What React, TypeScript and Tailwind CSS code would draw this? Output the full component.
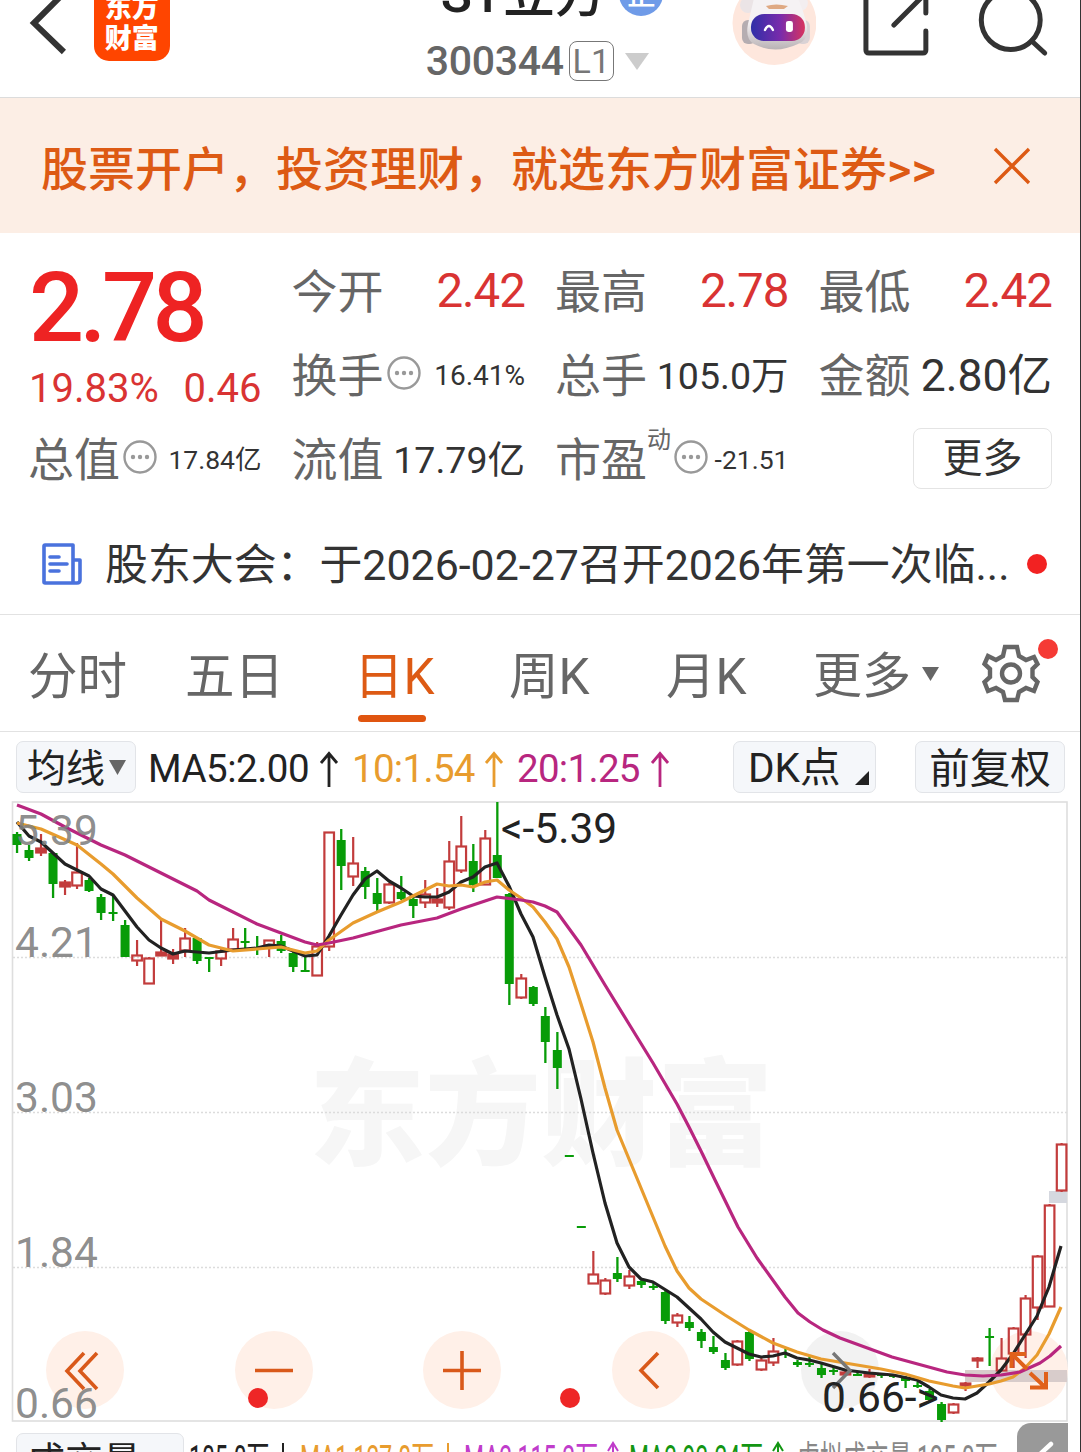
import React from 'react';

type Candle = [kind: 'r' | 'g', top: number, bottom: number, high: number, low: number];

const FONT = "font-[Roboto,'Noto_Sans_CJK_SC',sans-serif]";

const STEP = 12.007;
const FIRST_X = 17;

// body top, body bottom, wick top, wick bottom (chart pixels)
const candles: Candle[] = [
  ['g', 834, 845, 832, 853],
  ['g', 850, 858, 845, 861],
  ['r', 848, 853, 834, 856],
  ['g', 853, 884, 853, 898],
  ['r', 882, 887, 880, 895],
  ['r', 872, 886, 843, 889],
  ['g', 880, 891, 878, 892],
  ['g', 897, 913, 894, 920],
  ['g', 912, 914, 895, 921],
  ['g', 925, 957, 920, 957],
  ['r', 955, 961, 940, 966],
  ['r', 958, 984, 957, 984],
  ['r', 952, 956, 920, 956],
  ['r', 954, 959, 949, 964],
  ['r', 938, 951, 928, 957],
  ['g', 938, 961, 938, 964],
  ['g', 957, 959, 957, 972],
  ['r', 951, 959, 947, 966],
  ['r', 939, 950, 928, 950],
  ['g', 941, 943, 928, 949],
  ['g', 947, 949, 936, 955],
  ['r', 940, 946, 940, 957],
  ['g', 941, 951, 935, 953],
  ['g', 953, 967, 951, 972],
  ['g', 970, 972, 957, 972],
  ['r', 946, 976, 942, 976],
  ['r', 832, 947, 832, 951],
  ['g', 840, 866, 829, 890],
  ['r', 863, 877, 837, 886],
  ['g', 871, 887, 867, 899],
  ['g', 893, 904, 878, 911],
  ['r', 884, 903, 883, 904],
  ['g', 892, 899, 876, 900],
  ['g', 899, 906, 896, 918],
  ['r', 894, 903, 880, 908],
  ['r', 899, 903, 888, 907],
  ['r', 861, 908, 841, 910],
  ['r', 846, 871, 816, 873],
  ['g', 861, 885, 844, 892],
  ['r', 838, 885, 830, 885],
  ['g', 855, 878, 802, 878],
  ['g', 894, 984, 893, 1005],
  ['r', 978, 998, 974, 999],
  ['g', 987, 1004, 986, 1006],
  ['g', 1016, 1042, 1007, 1063],
  ['g', 1050, 1068, 1032, 1089],
  ['g', 1155, 1157, 1155, 1157],
  ['g', 1226, 1228, 1226, 1228],
  ['r', 1274, 1284, 1251, 1284],
  ['r', 1280, 1294, 1278, 1295],
  ['g', 1273, 1279, 1257, 1282],
  ['r', 1276, 1286, 1270, 1289],
  ['g', 1281, 1285, 1279, 1288],
  ['g', 1286, 1288, 1283, 1290],
  ['g', 1292, 1321, 1290, 1324],
  ['r', 1315, 1323, 1313, 1327],
  ['g', 1322, 1328, 1316, 1331],
  ['g', 1332, 1341, 1329, 1348],
  ['g', 1347, 1352, 1336, 1354],
  ['g', 1360, 1368, 1353, 1370],
  ['r', 1341, 1365, 1340, 1366],
  ['g', 1332, 1359, 1329, 1361],
  ['r', 1360, 1370, 1357, 1371],
  ['r', 1351, 1363, 1338, 1366],
  ['g', 1353, 1355, 1349, 1358],
  ['g', 1362, 1365, 1360, 1367],
  ['g', 1363, 1365, 1355, 1367],
  ['g', 1368, 1375, 1364, 1378],
  ['g', 1370, 1372, 1367, 1375],
  ['r', 1372, 1375, 1371, 1376],
  ['g', 1374, 1376, 1372, 1376],
  ['r', 1373, 1377, 1369, 1378],
  ['g', 1374, 1376, 1373, 1378],
  ['g', 1375, 1377, 1374, 1378],
  ['g', 1377, 1381, 1376, 1388],
  ['g', 1385, 1387, 1382, 1388],
  ['g', 1391, 1400, 1389, 1402],
  ['g', 1404, 1420, 1402, 1422],
  ['r', 1404, 1413, 1403, 1414],
  ['r', 1383, 1386, 1382, 1391],
  ['r', 1358, 1361, 1357, 1368],
  ['g', 1336, 1338, 1328, 1366],
  ['r', 1358, 1371, 1338, 1371],
  ['r', 1328, 1354, 1327, 1368],
  ['r', 1298, 1335, 1295, 1358],
  ['r', 1256, 1308, 1255, 1320],
  ['r', 1205, 1307, 1204, 1307],
  ['r', 1144, 1191, 1143, 1192],
];

const ma5 =
  '17,822 29,836 41,842 53,853 65,864 77,870 89,876 101,889 113,895 125,911 137,927 149,940 161,948 173,954 185,951 209,953 233,950 257,948 269,945 281,946 293,951 305,956 317,955 329,936 341,915 353,895 365,879 377,871 389,881 401,888 413,896 425,897 437,897 449,892 461,882 473,877 485,867 497,863 509,886 521,914 533,937 545,977 557,1015 569,1049 581,1099 593,1153 605,1203 617,1243 629,1267 641,1279 653,1282 677,1297 701,1319 713,1332 725,1342 749,1354 761,1357 773,1356 785,1353 797,1358 809,1360 821,1363 845,1370 869,1373 893,1375 917,1380 929,1387 941,1395 953,1398 965,1399 977,1393 989,1382 1001,1370 1013,1354 1025,1335 1037,1316 1049,1287 1061,1246';

const ma10 =
  '17,823 41,829 77,845 101,864 113,874 137,898 161,919 185,931 209,945 221,948 233,951 257,949 281,947 305,953 317,951 329,940 353,923 377,912 401,902 413,896 425,890 437,884 449,886 461,885 473,887 485,882 497,880 509,890 521,898 533,907 545,922 557,939 569,967 581,1004 593,1042 605,1088 617,1130 629,1159 641,1188 665,1246 677,1271 689,1288 701,1299 725,1315 749,1330 773,1343 797,1352 821,1359 845,1363 881,1369 905,1374 929,1381 953,1386 965,1388 989,1384 1001,1381 1013,1377 1025,1368 1037,1355 1049,1334 1061,1307';

const ma20 =
  '17,805 41,814 65,827 101,845 125,855 149,867 197,891 209,900 221,906 257,924 281,933 305,942 317,945 329,943 353,938 401,925 437,918 461,909 485,901 497,897 521,900 533,902 545,906 557,912 581,945 605,985 629,1024 653,1063 677,1104 689,1127 701,1151 715,1180 738,1227 757,1258 785,1297 798,1313 810,1322 823,1330 840,1338 892,1357 947,1372 965,1375 983,1376 1001,1375 1020,1372 1040,1363 1050,1356 1061,1346';

const priceLabels = [
  { text: '5.39', y: 845 },
  { text: '4.21', y: 957 },
  { text: '3.03', y: 1112 },
  { text: '1.84', y: 1267 },
  { text: '0.66', y: 1418 },
];

const InfoDots = () => (
  <svg width="34" height="34" viewBox="0 0 34 34" className="shrink-0">
    <circle cx="17" cy="17" r="15.5" fill="none" stroke="#999" strokeWidth="2.4" />
    <circle cx="10" cy="17" r="2.2" fill="#999" />
    <circle cx="17" cy="17" r="2.2" fill="#999" />
    <circle cx="24" cy="17" r="2.2" fill="#999" />
  </svg>
);

const UpArrow = ({ color }: { color: string }) => (
  <svg width="20" height="38" viewBox="0 0 20 38" fill="none" stroke={color} strokeWidth="2.8" className="mt-[3px]">
    <path d="M10 37V3M2 13L10 3.5L18 13" />
  </svg>
);

const Header = () => (
  <header className="flex h-[98px] shrink-0 overflow-hidden border-b border-[#dcdcdc]">
    <svg width="94" height="97" viewBox="0 0 94 97" fill="none" stroke="#333" strokeWidth="6">
      <path d="M64 -7L34 23L64 52" />
    </svg>
    <div className="-mt-[15px] flex h-[76px] w-[76px] flex-col items-center justify-end rounded-[15px] bg-[#ff4500] pb-[6px] text-[27px] leading-[31px] font-black text-white">
      <span>东方</span>
      <span>财富</span>
    </div>
    <div className="ml-[255px] flex w-[240px] flex-col">
      <div className="-mt-[36px] flex h-[62px] items-center pl-[16px] text-[51.5px] leading-[62px] font-medium whitespace-nowrap text-[#222]">
        ST立方
        <span className="-mt-[3px] ml-[13px] flex h-[44px] w-[44px] shrink-0 items-center justify-center rounded-full bg-[#6f9be8] text-[30px] leading-[44px] text-white">
          企
        </span>
      </div>
      <div className="mt-[4px] flex h-[62px] items-center pl-[1px]">
        <span className="text-[41px] leading-none font-medium tracking-[-0.3px] text-[#666]">300344</span>
        <span className="ml-[5px] flex h-[40px] w-[45px] items-center justify-center rounded-[8px] border-[1.5px] border-[#777] text-[34px] leading-none text-[#777]">
          L1
        </span>
        <svg width="24" height="17" viewBox="0 0 24 17" className="ml-[11px] shrink-0">
          <path d="M0 0H24L12 17Z" fill="#ccc" />
        </svg>
      </div>
    </div>
    <svg width="84" height="97" viewBox="732 0 84 97" className="ml-[68px]">
      <defs>
        <linearGradient id="visor" x1="0" x2="1">
          <stop offset="0" stopColor="#2f2fa8" />
          <stop offset="0.55" stopColor="#7a2bab" />
          <stop offset="1" stopColor="#d8345f" />
        </linearGradient>
        <linearGradient id="shell" x1="0" x2="0" y1="0" y2="1">
          <stop offset="0.5" stopColor="#f5f2f4" />
          <stop offset="1" stopColor="#b9b2b5" />
        </linearGradient>
      </defs>
      <circle cx="774.500" cy="23" r="42" fill="#fee7dd" />
      <circle cx="748" cy="5" r="8" fill="#ebe4e6" />
      <circle cx="800" cy="3" r="8" fill="#f3eef0" />
      <rect x="742" y="20" width="14" height="24" rx="6" fill="#b5adb1" />
      <rect x="796" y="20" width="14" height="24" rx="6" fill="#d9d2d5" />
      <path d="M755 -6H796Q803 8 807 25Q809 40 798 44Q775 55 754 44Q745 39 748 24Z" fill="url(#shell)" />
      <path d="M766 6Q776 3 788 6L784 9H769Z" fill="#dfa983" />
      <rect x="751" y="14" width="54" height="27" rx="13" fill="url(#visor)" />
      <path d="M765 30Q769 22 773 30" fill="none" stroke="#fff" strokeWidth="2.4" strokeLinecap="round" />
      <rect x="786" y="21" width="7" height="11" rx="2.5" fill="#fff" />
    </svg>
    <svg width="264" height="97" viewBox="816 0 264 97" fill="none" stroke="#333" strokeWidth="5" strokeLinecap="round">
      <path d="M866 -10V50Q866 53 869 53H923Q926 53 926 50V31M926 -10V13M894 25L926 -7" />
      <circle cx="1011" cy="20" r="29.500" />
      <path d="M1032 41L1045 53" />
    </svg>
  </header>
);

const Banner = () => (
  <div className="flex h-[135px] shrink-0 items-center bg-[#fceee5] pl-[41px] text-[47px] font-medium text-[#dd5a14]">
    <span className="mt-[9px] w-[951px] leading-[60px] whitespace-nowrap">股票开户，投资理财，就选东方财富证券&gt;&gt;</span>
    <svg width="40" height="40" viewBox="0 0 40 40" className="shrink-0" stroke="currentColor" strokeWidth="3.4">
      <path d="M3 3L37 37M37 3L3 37" />
    </svg>
  </div>
);

interface StatProps {
  label: string;
  value: string;
  valueClass: string;
  info?: boolean;
  sup?: string;
}

const Stat = ({ label, value, valueClass, info, sup }: StatProps) => (
  <div className="flex h-[84px] items-center whitespace-nowrap">
    <span className="text-[46px] leading-[60px] text-[#666]">{label}</span>
    {sup && <span className="-mt-[40px] text-[24px] leading-[28px] text-[#666]">{sup}</span>}
    {info && (
      <span className="-mt-[6px] -mr-[6px] ml-[3px] shrink-0">
        <InfoDots />
      </span>
    )}
    <span className={`ml-auto ${valueClass}`}>{value}</span>
  </div>
);

const Quote = () => (
  <section className="grid h-[280px] shrink-0 grid-cols-4 content-start gap-x-[30px] px-[28px] pt-[17px]">
    <div className="row-span-2 h-[168px] text-[#ee2323]">
      <div className="h-[110px] pt-[7px] pl-[1px] text-[97px] leading-[103px] font-medium tracking-[-4.6px]">2.78</div>
      <div className="flex justify-between pl-[1px] text-[40px] leading-[58px] text-[#d93333]">
        <span>19.83%</span>
        <span>0.46</span>
      </div>
    </div>
    <Stat label="今开" value="2.42" valueClass="text-[47.5px] tracking-[-1px] text-[#d93333]" />
    <Stat label="最高" value="2.78" valueClass="text-[47.5px] tracking-[-1px] text-[#d93333]" />
    <Stat label="最低" value="2.42" valueClass="text-[47.5px] tracking-[-1px] text-[#d93333]" />
    <Stat label="换手" info value="16.41%" valueClass="text-[28px] text-[#333]" />
    <Stat label="总手" value="105.0万" valueClass="text-[37.5px] text-[#333]" />
    <Stat label="金额" value="2.80亿" valueClass="text-[44.5px] text-[#333]" />
    <Stat label="总值" info value="17.84亿" valueClass="text-[26.5px] text-[#333]" />
    <Stat label="流值" value="17.79亿" valueClass="text-[37.5px] text-[#333]" />
    <Stat label="市盈" sup="动" info value="-21.51" valueClass="text-[26.5px] text-[#333]" />
    <div className="flex h-[80px] items-center justify-end">
      <button className="h-[61px] w-[139px] rounded-[8px] border-[1.5px] border-[#e4e4e4] text-[40px] leading-[57px] text-[#333]">
        更多
      </button>
    </div>
  </section>
);

const News = () => (
  <div className="flex h-[102px] shrink-0 items-center border-b border-[#e2e2e2] pl-[42px]">
    <svg width="40" height="42" viewBox="0 0 40 42" fill="none" stroke="#4a72dd" strokeWidth="3.6" strokeLinejoin="round" className="shrink-0">
      <path d="M3 2H31V40H3Q2 40 2 39V3Q2 2 3 2ZM31 17H38V37Q38 40 35 40H31" />
      <path d="M8 14H17M8 21H25M8 28H17" strokeLinecap="round" />
    </svg>
    <span className="mt-[2px] ml-[23px] w-[922px] text-[42.9px] leading-[60px] whitespace-nowrap text-[#333]">
      股东大会：于2026-02-27召开2026年第一次临...
    </span>
    <span className="h-[20px] w-[20px] shrink-0 rounded-full bg-[#f22222]" />
  </div>
);

const tabs = [
  { label: '分时', width: 'w-[157px]' },
  { label: '五日', width: 'w-[169px]' },
  { label: '日K', width: 'w-[155px]', active: true },
  { label: '周K', width: 'w-[157px]' },
  { label: '月K', width: 'w-[147px]' },
];

const Tabs = () => (
  <nav className="flex h-[117px] shrink-0 border-b border-[#e2e2e2] pl-[28px] text-[49.5px] text-[#666]">
    {tabs.map((tab) => (
      <div key={tab.label} className={`${tab.width} shrink-0 pt-[26px] ${tab.active ? 'text-[#dd5a14]' : ''}`}>
        <div className="leading-[72px]">{tab.label}</div>
        {tab.active && <div className="mt-[2px] ml-[4px] h-[7px] w-[68px] rounded-full bg-[#e05510]" />}
      </div>
    ))}
    <div className="flex h-[72px] shrink-0 items-center pt-[26px] leading-[72px]">
      <span className="mt-[26px] w-[98px] text-[49px]">更多</span>
      <svg width="17" height="14" viewBox="0 0 17 14" className="mt-[19px] ml-[11px]">
        <path d="M0 0H17L8.5 14Z" fill="#666" />
      </svg>
    </div>
    <svg width="90" height="90" viewBox="969 615 90 90" fill="none" stroke="#666" strokeWidth="4.4" className="ml-[30px] shrink-0">
      <path d="M1005 647H1017L1019 656L1026 660L1034 657L1037.5 664L1032.500 669V677L1037.500 682L1034 691L1026 688L1019 692L1017 700H1005L1003 692L996 688L988 691L984.500 682L990 677V669L984.500 664L988 656L996 660L1003 656Z" />
      <circle cx="1011" cy="673.500" r="9" />
      <circle cx="1048" cy="649" r="10" fill="#f53a35" stroke="none" />
    </svg>
  </nav>
);

const chip = 'flex h-[52px] items-center rounded-[7px] border-[1.5px] border-[#e2e4e8] bg-[#f5f7fa] text-[#222]';

const MaBar = () => (
  <div className="flex h-[70px] shrink-0 items-center pl-[16px] text-[38.5px] leading-[52px] whitespace-nowrap text-[#222]">
    <div className={`${chip} w-[120px] pl-[10px] text-[39px]`}>
      <span className="mt-[3px]">均线</span>
      <svg width="17" height="15" viewBox="0 0 17 15" className="ml-[4px]">
        <path d="M0 0H17L8.5 15Z" fill="#666" />
      </svg>
    </div>
    <span className="mt-[3px] ml-[12px] w-[171px] tracking-[-0.5px]">MA5:2.00</span>
    <UpArrow color="#222" />
    <span className="mt-[3px] ml-[13px] w-[132px] tracking-[-0.7px] text-[#e89c2e]">10:1.54</span>
    <UpArrow color="#e89c2e" />
    <span className="mt-[3px] ml-[13px] w-[133px] tracking-[-0.7px] text-[#b8267f]">20:1.25</span>
    <UpArrow color="#b8267f" />
    <div className={`${chip} ml-[63px] w-[143px] justify-between pr-[6px] pl-[14px] text-[40.5px]`}>
      <span className="mt-[2px]">DK点</span>
      <svg width="14" height="14" viewBox="0 0 14 14" className="mt-[22px]">
        <path d="M14 0V14H0Z" fill="#222" />
      </svg>
    </div>
    <div className={`${chip} ml-[39px] w-[150px] justify-center text-[40.5px]`}>
      <span className="mt-[3px]">前复权</span>
    </div>
  </div>
);

const CandleBar = ({ candle, index }: { candle: Candle; index: number }) => {
  const [kind, top, bottom, high, low] = candle;
  const x = FIRST_X + index * STEP;
  if (kind === 'g') {
    return (
      <g fill="#089c08">
        <rect x={x - 1.1} y={high} width="2.3" height={low - high} />
        <rect x={x - 4.5} y={top} width="9" height={bottom - top} />
      </g>
    );
  }
  const hollow = bottom - top > 5;
  return (
    <g stroke="#c23c3c" strokeWidth="2.2" fill={hollow ? 'none' : '#c23c3c'}>
      <path d={`M${x} ${high}V${top}M${x} ${bottom}V${low}`} />
      <rect x={x - 4.8} y={top + 0.5} width="9.6" height={bottom - top - 1} />
    </g>
  );
};

const KLineChart = () => (
  <svg width="1080" height="622" viewBox="0 801 1080 622" className="shrink-0" fill="none">
    <text x="309" y="1156" fontSize="116" fontWeight="900" fill="#f6f6f6">
      东方财富
    </text>
    <rect x="12.500" y="802" width="1054.500" height="619" stroke="#dedede" strokeWidth="1.600" />
    {[957, 1112, 1267].map((y) => (
      <path key={y} d={`M13 ${y}.5H1067`} stroke="#dcdcdc" strokeWidth="1.300" strokeDasharray="2 2" />
    ))}

    {[85, 274, 462, 651, 1029].map((cx) => (
      <circle key={cx} cx={cx} cy="1370" r="39" fill="#fff0e8" />
    ))}
    <circle cx="840" cy="1370" r="39" fill="#f2f2f2" />
    <rect x="1049" y="1191" width="18" height="12" fill="#d5d8df" />
    <rect x="965" y="1370" width="102" height="12" fill="#d8cccb" />

    {candles.map((candle, i) => (
      <CandleBar key={i} candle={candle} index={i} />
    ))}

    <g strokeWidth="3.200" strokeLinejoin="round">
      <polyline points={ma5} stroke="#222" />
      <polyline points={ma10} stroke="#e89c2e" />
      <polyline points={ma20} stroke="#b8267f" />
    </g>

    <g stroke="#d9591a" strokeWidth="3.600">
      <path d="M84 1353L67 1371L84 1389M97 1353L80 1371L97 1389" />
      <path d="M255 1370.500H293M443 1370.500H481M462 1351V1390" />
      <path d="M658 1353L641 1370.500L658 1388" />
    </g>
    <path
      d="M1027 1369L1012 1354M1011.500 1368V1354H1026M1030 1373L1045 1387M1030 1387.500H1046V1372"
      stroke="#e0611a"
      strokeWidth="4"
    />
    <path d="M833 1353L850 1370.500L833 1388" stroke="#777" strokeWidth="3.400" />
    <circle cx="258" cy="1398" r="10" fill="#ee2626" />
    <circle cx="570" cy="1398" r="10" fill="#ee2626" />

    <g fontSize="42.500" fill="#808080" fillOpacity="0.9">
      {priceLabels.map((label) => (
        <text key={label.text} x="15" y={label.y}>
          {label.text}
        </text>
      ))}
    </g>
    <g fontSize="42.500" fill="#222">
      <text x="501" y="843">&lt;-5.39</text>
      <text x="822" y="1412">0.66-&gt;</text>
    </g>
  </svg>
);

const squeezed = 'block origin-left scale-x-[0.603]';

const VolumeBar = () => (
  <div className="flex h-[60px] shrink-0 items-start pt-[10px] pl-[16px] text-[38px] leading-[52px] whitespace-nowrap">
    <div className={`${chip} w-[168px] shrink-0 pl-[10px]`}>
      <span className="mt-[3px]">成交量</span>
      <svg width="17" height="15" viewBox="0 0 17 15" className="mt-[6px] ml-[17px]">
        <path d="M0 0H17L8.5 15Z" fill="#666" />
      </svg>
    </div>
    <div className="flex w-[833px] shrink-0 pt-[1px]">
      <div className="ml-[5px] w-[93px] shrink-0 text-[#222]"><span className={squeezed}>105.0万</span></div>
      <div className="mt-[9px] h-[30px] w-[2px] shrink-0 bg-[#222]" />
      <div className="ml-[16px] w-[147px] shrink-0 text-[#e89c2e]"><span className={squeezed}>MA1:127.8万</span></div>
      <div className="mt-[9px] h-[30px] w-[2px] shrink-0 bg-[#e89c2e]" />
      <div className="ml-[15px] w-[143px] shrink-0 text-[#c03ccb]"><span className={squeezed}>MA2:115.2万</span></div>
      <svg width="12" height="36" viewBox="0 0 12 36" fill="none" stroke="#c03ccb" strokeWidth="2" className="mt-[7px] shrink-0">
        <path d="M6 36V2M1 10L6 2L11 10" />
      </svg>
      <div className="ml-[10px] w-[143px] shrink-0 text-[#139613]"><span className={squeezed}>MA3:93.24万</span></div>
      <svg width="12" height="36" viewBox="0 0 12 36" fill="none" stroke="#139613" strokeWidth="2" className="mt-[7px] shrink-0">
        <path d="M6 36V2M1 10L6 2L11 10" />
      </svg>
      <div className="ml-[13px] w-[220px] shrink-0 text-[#888]"><span className={squeezed}>虚拟成交量:135.0万</span></div>
    </div>
    <div className="-mt-[10px] h-[60px] w-[51px] shrink-0 rounded-tl-[14px] bg-[#999]">
      <svg width="51" height="60" viewBox="0 0 51 60" fill="none" stroke="#fff" strokeWidth="4.500" strokeLinecap="round">
        <path d="M34 21L21 33L34 45" />
      </svg>
    </div>
  </div>
);

export default function App() {
  return (
    <div className={`flex h-[1452px] w-[1081px] flex-col overflow-hidden border-r border-[#333] bg-white ${FONT}`}>
      <Header />
      <Banner />
      <Quote />
      <News />
      <Tabs />
      <div className="-mb-[1px] shrink-0">
        <MaBar />
      </div>
      <KLineChart />
      <VolumeBar />
    </div>
  );
}
